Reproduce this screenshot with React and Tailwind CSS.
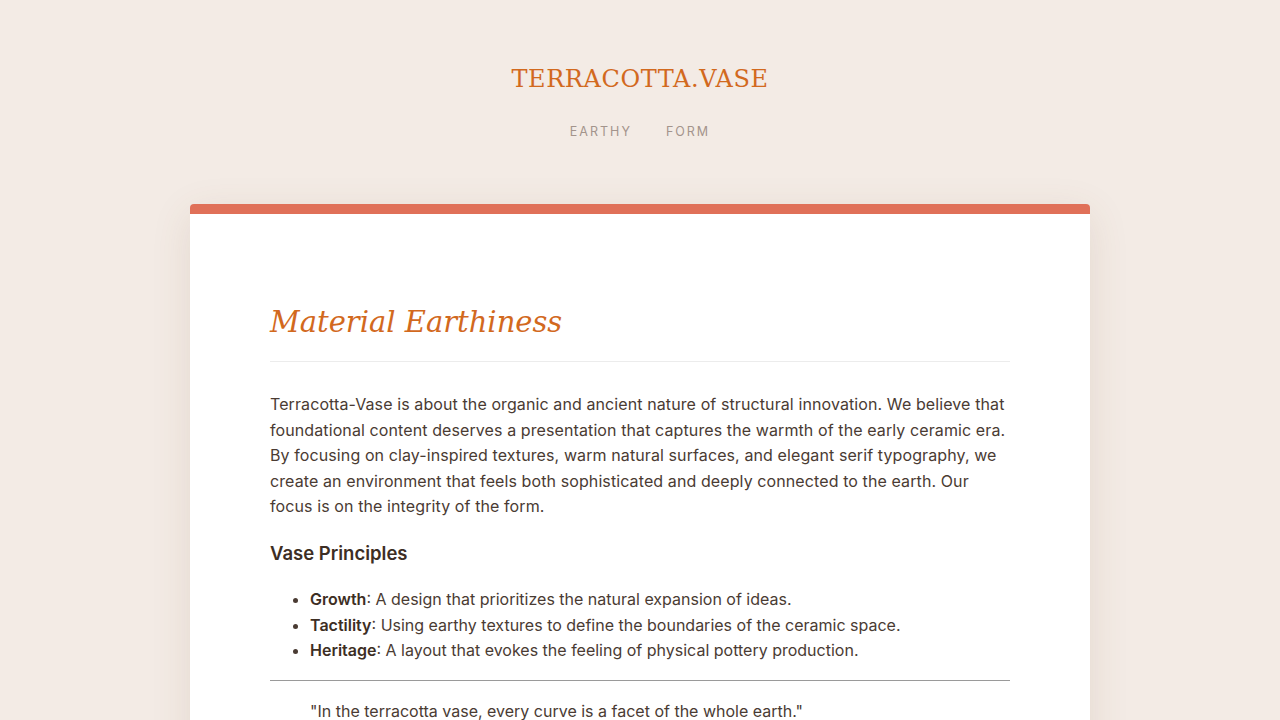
export default function App() {
  return (
    <div className="min-h-screen bg-[#f3ebe5] font-['Inter',sans-serif] text-[#4a3b33]">
      <header className="flex flex-col items-center pt-[63px]">
        <h1 className="font-['DejaVu_Serif',serif] text-[24px] leading-[32px] tracking-[0.6px] text-[#d2691e]">
          TERRACOTTA.VASE
        </h1>
        <nav className="mt-[29px] flex gap-[34px] text-[12.5px] leading-[16px] tracking-[2px] text-[#a3948c]">
          <span>EARTHY</span>
          <span>FORM</span>
        </nav>
      </header>
      <main className="mx-auto mt-[64px] w-[900px] rounded-t-[4px] border-t-[10px] border-[#e07058] bg-white px-[80px] pt-[86px] pb-[80px] shadow-[0_10px_40px_rgba(120,80,50,0.12)]">
        <h2 className="border-b border-[#ececec] pb-[17px] font-['DejaVu_Serif',serif] text-[29px] italic leading-[44px] text-[#d2691e]">
          Material Earthiness
        </h2>
        <p className="mt-[30px] text-[16px] leading-[25.6px] tracking-[0.1px]">
          Terracotta-Vase is about the organic and ancient nature of structural innovation. We believe that foundational content deserves a presentation that captures the warmth of the early ceramic era. By focusing on clay-inspired textures, warm natural surfaces, and elegant serif typography, we create an environment that feels both sophisticated and deeply connected to the earth. Our focus is on the integrity of the form.
        </p>
        <h3 className="mt-[20px] text-[18.5px] font-semibold leading-[26px] text-[#3d2e24]">Vase Principles</h3>
        <ul className="mt-[21px] list-disc pl-[40px] text-[16px] leading-[25.6px]">
          <li><strong className="font-semibold text-[#3d2e24]">Growth</strong>: A design that prioritizes the natural expansion of ideas.</li>
          <li><strong className="font-semibold text-[#3d2e24]">Tactility</strong>: Using earthy textures to define the boundaries of the ceramic space.</li>
          <li><strong className="font-semibold text-[#3d2e24]">Heritage</strong>: A layout that evokes the feeling of physical pottery production.</li>
        </ul>
        <hr className="mt-[16px] border-t border-[#9a9a9a]" />
        <blockquote className="mx-[40px] mt-[18px] text-[16px] leading-[25.6px]">
          "In the terracotta vase, every curve is a facet of the whole earth."
        </blockquote>
      </main>
    </div>
  );
}
